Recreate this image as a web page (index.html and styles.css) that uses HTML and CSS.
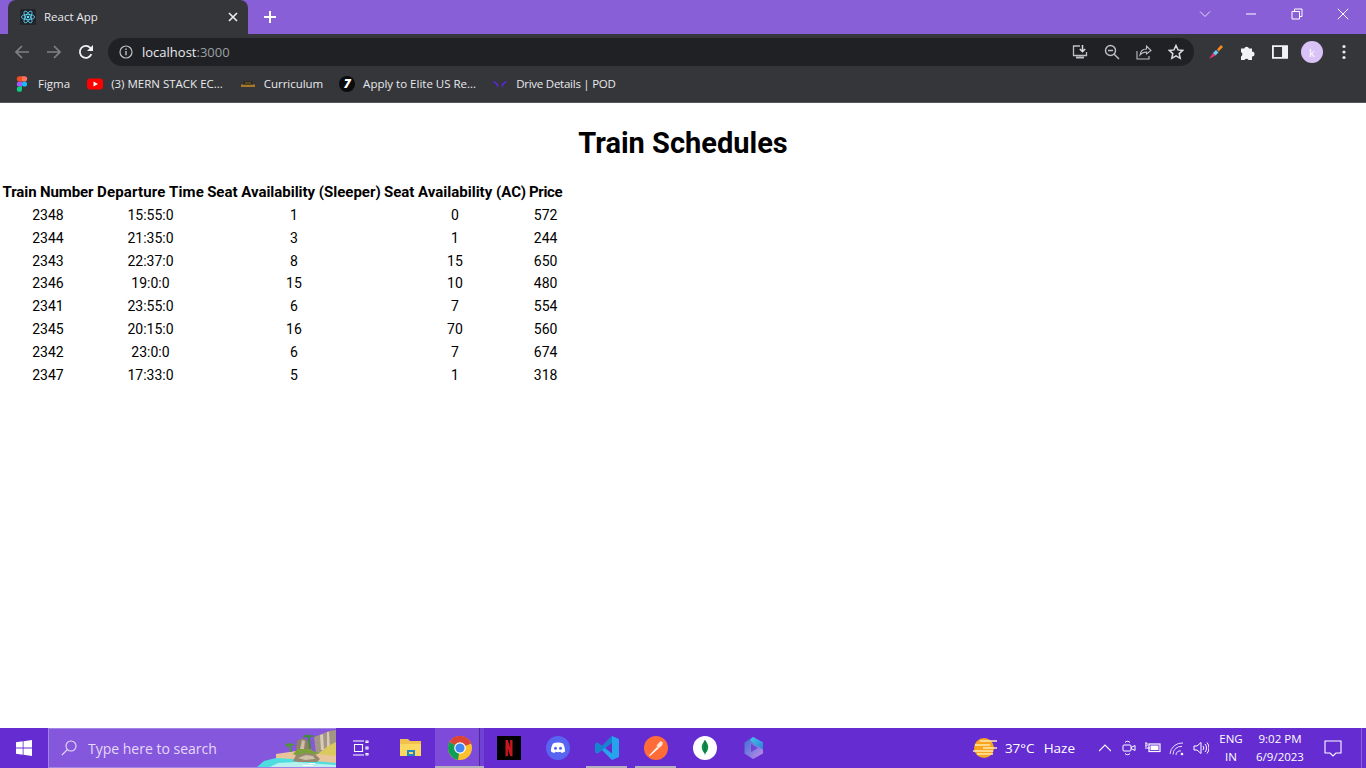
FILE: index.html
```html
<!DOCTYPE html>
<html lang="en">
<head>
<meta charset="utf-8">
<title>React App</title>
<link rel="stylesheet" href="styles.css">
</head>
<body>
<div class="screen">
  <header class="tabstrip">
    <div class="tab">
      <svg class="favicon" viewBox="0 0 16 16"><rect width="16" height="16" rx="2" fill="#20232a"/><g fill="none" stroke="#61dafb" stroke-width=".8"><ellipse cx="8" cy="8" rx="6.6" ry="2.6"/><ellipse cx="8" cy="8" rx="6.6" ry="2.6" transform="rotate(60 8 8)"/><ellipse cx="8" cy="8" rx="6.6" ry="2.6" transform="rotate(120 8 8)"/></g><circle cx="8" cy="8" r="1.3" fill="#61dafb"/></svg>
      <span class="tab-title">React App</span>
      <svg class="tab-close" viewBox="0 0 10 10"><path d="M1 1l8 8M9 1L1 9" stroke="#e8eaed" stroke-width="1.7"/></svg>
    </div>
    <svg class="new-tab" viewBox="0 0 12 12"><path d="M6 0v12M0 6h12" stroke="#fff" stroke-width="2"/></svg>
    <div class="win-controls">
      <span class="win-btn"><svg class="i12" viewBox="0 0 12 12"><path d="M1 3.5l5 5 5-5" fill="none" stroke="#e6dcf7" stroke-width="1"/></svg></span>
      <span class="win-btn"><svg class="i12" viewBox="0 0 12 12"><path d="M1 6h10" stroke="#fff" stroke-width="1"/></svg></span>
      <span class="win-btn"><svg class="i12" viewBox="0 0 12 12"><path d="M1 3.5h7.5V11H1zM3.5 3.5V1H11v7.5H8.5" fill="none" stroke="#fff" stroke-width="1"/></svg></span>
      <span class="win-btn"><svg class="i12" viewBox="0 0 12 12"><path d="M.8.8l10.4 10.4M11.2.8L.8 11.2" stroke="#fff" stroke-width="1"/></svg></span>
    </div>
  </header>

  <nav class="toolbar">
    <span class="tool"><svg class="i16" viewBox="0 0 16 16"><path d="M15 8H2M8 2L2 8l6 6" fill="none" stroke="#7f8184" stroke-width="1.7"/></svg></span>
    <span class="tool"><svg class="i16" viewBox="0 0 16 16"><path d="M1 8h13M8 2l6 6-6 6" fill="none" stroke="#7f8184" stroke-width="1.7"/></svg></span>
    <span class="tool"><svg class="i16" viewBox="0 0 16 16"><path d="M13.4 10.2A6 6 0 1 1 12.3 3.8L14 5.5" fill="none" stroke="#f1f3f4" stroke-width="1.8"/><path d="M15 1v6H9z" fill="#f1f3f4"/></svg></span>
    <div class="omnibox">
      <svg class="info" viewBox="0 0 14 14"><circle cx="7" cy="7" r="6" fill="none" stroke="#bdc1c6" stroke-width="1.2"/><path d="M7 6v4.2M7 3.6v1.3" stroke="#bdc1c6" stroke-width="1.4"/></svg>
      <span class="url">localhost<span class="url-port">:3000</span></span>
      <span class="omni-actions">
        <span class="tool"><svg class="i16" viewBox="0 0 16 16"><path d="M8 2H1.500v9.500h13V8" fill="none" stroke="#bdc1c6" stroke-width="1.300"/><path d="M4 12.500h8v2H4z" fill="#bdc1c6"/><path d="M10.500 1v6.500M7.800 5l2.700 2.700L13.200 5" fill="none" stroke="#dadce0" stroke-width="1.500"/></svg></span>
        <span class="tool"><svg class="i16" viewBox="0 0 16 16"><circle cx="6.500" cy="6.500" r="5" fill="none" stroke="#bdc1c6" stroke-width="1.400"/><path d="M10.200 10.200L15 15M4 6.500h5" stroke="#bdc1c6" stroke-width="1.400"/></svg></span>
        <span class="tool"><svg class="i16" viewBox="0 0 16 16"><path d="M1 7v8h12v-3" fill="none" stroke="#bdc1c6" stroke-width="1.100"/><path d="M4 11c.5-4 3.500-6 6.500-6V2L15 6.500 10.500 10V8C8 8 5.500 9 4 11z" fill="none" stroke="#bdc1c6" stroke-width="1.100"/></svg></span>
        <span class="tool"><svg class="i16" viewBox="0 0 16 16"><path d="M8 1.500l2 4.400 4.800.5-3.600 3.200 1 4.700L8 11.900l-4.200 2.400 1-4.700L1.200 6.400 6 5.900z" fill="none" stroke="#dadce0" stroke-width="1.500"/></svg></span>
      </span>
    </div>
    <div class="extensions">
      <span class="tool"><svg class="i16" viewBox="0 0 16 16"><path d="M1 15l4-6 2.500 2.500z" fill="#e8356d"/><path d="M5 9l3-3 2.500 2.500-3 3z" fill="#6ecbf5"/><path d="M9 5.500L13 1l2 2-4.500 4.500z" fill="#f98b1d"/></svg></span>
      <span class="tool"><svg class="i16" viewBox="0 0 16 16"><path d="M1 4.500h3.200a2.500 2.500 0 0 1 4.800 0H12v3a2.500 2.500 0 0 1 0 5V16H8.500a2.300 2.300 0 0 0-4 0H1v-3.500a2.500 2.500 0 0 0 0-4.500z" fill="#f1f3f4"/></svg></span>
      <span class="tool"><svg class="i16" viewBox="0 0 14 12"><path d="M0 0h14v12H0zM1.600 1.600v8.800H8.800V1.600z" fill="#f1f3f4" fill-rule="evenodd"/></svg></span>
      <span class="tool"><span class="avatar">k</span></span>
      <span class="tool"><svg class="i16" viewBox="0 0 16 16"><circle cx="8" cy="2.500" r="1.600" fill="#e8eaed"/><circle cx="8" cy="8" r="1.600" fill="#e8eaed"/><circle cx="8" cy="13.500" r="1.600" fill="#e8eaed"/></svg></span>
    </div>
  </nav>

  <nav class="bookmarks">
    <a class="bm bm-figma"><svg class="i16" viewBox="0 0 16 16"><circle cx="10.500" cy="8" r="2.600" fill="#1abcfe"/><path d="M8 5.400H5.400a2.600 2.600 0 0 0 0 5.200H8z" fill="#a259ff"/><path d="M8 .2H5.400a2.600 2.600 0 0 0 0 5.200H8z" fill="#f24e1e"/><path d="M8 .2h2.600a2.600 2.600 0 0 1 0 5.200H8z" fill="#ff7262"/><path d="M8 10.600H5.400A2.600 2.600 0 1 0 8 13.200z" fill="#0acf83"/></svg>Figma</a>
    <a class="bm bm-yt"><svg class="i16" viewBox="0 0 16 16"><rect y="2.500" width="16" height="11" rx="3" fill="#f00"/><path d="M6.500 5.500L11 8l-4.500 2.500z" fill="#fff"/></svg>(3) MERN STACK EC...</a>
    <a class="bm bm-cur"><svg class="i16" viewBox="0 0 16 16"><path d="M1 8.500h14v2.500H1z" fill="#a8772a"/><path d="M3.500 5.500h9v3h-9z" fill="#2f2412"/><path d="M5 6.500h6v1H5z" fill="#7d6a3d"/></svg>Curriculum</a>
    <a class="bm bm-elite"><span class="seven">7</span>Apply to Elite US Re...</a>
    <a class="bm bm-pod"><svg class="i16" viewBox="0 0 16 16"><path d="M0 5c3 0 5 1.500 6.500 4l-.5 3C5 9 3 7 0 5zM16 5c-3 0-5 1.500-6.500 4l.5 3c1-3 3-5 6-7z" fill="#5a27d8"/></svg>Drive Details | POD</a>
  </nav>

  <main class="page">
    <h1 class="title">Train Schedules</h1>
    <table class="schedule">
      <thead>
        <tr><th class="c1">Train Number</th><th class="c2">Departure Time</th><th class="c3">Seat Availability (Sleeper)</th><th class="c4">Seat Availability (AC)</th><th class="c5">Price</th></tr>
      </thead>
      <tbody>
        <tr><td>2348</td><td>15:55:0</td><td>1</td><td>0</td><td>572</td></tr>
        <tr><td>2344</td><td>21:35:0</td><td>3</td><td>1</td><td>244</td></tr>
        <tr><td>2343</td><td>22:37:0</td><td>8</td><td>15</td><td>650</td></tr>
        <tr><td>2346</td><td>19:0:0</td><td>15</td><td>10</td><td>480</td></tr>
        <tr><td>2341</td><td>23:55:0</td><td>6</td><td>7</td><td>554</td></tr>
        <tr><td>2345</td><td>20:15:0</td><td>16</td><td>70</td><td>560</td></tr>
        <tr><td>2342</td><td>23:0:0</td><td>6</td><td>7</td><td>674</td></tr>
        <tr><td>2347</td><td>17:33:0</td><td>5</td><td>1</td><td>318</td></tr>
      </tbody>
    </table>
  </main>

  <footer class="taskbar">
    <span class="start"><svg class="i16" viewBox="0 0 16 16"><path d="M0 2.300l6.700-1v6.300H0zM7.500 1.200L16 0v7.600H7.500zM0 8.400h6.700v6.300l-6.700-1zM7.500 8.400H16V16l-8.500-1.200z" fill="#fff"/></svg></span>
    <div class="search">
      <svg class="search-icon" viewBox="0 0 16 16"><circle cx="10" cy="6" r="5" fill="none" stroke="#eadffa" stroke-width="1.100"/><path d="M6.300 9.700L.8 15.200" stroke="#eadffa" stroke-width="1.200"/></svg>
      <span class="search-text">Type here to search</span>
      <svg class="island" viewBox="0 0 80 40">
        <path d="M20 26l20-3 40 4v8H20z" fill="#e9c39a"/>
        <path d="M0 40l8-7 12-3 17 1 43 4v5z" fill="#4fdde0"/>
        <path d="M12 40l10-5 18-1 40 3v3z" fill="#b9f1ee"/>
        <path d="M58 9l8-3 7-3 7-1v24H60z" fill="#a39684"/>
        <path d="M64 7l3-1 1 16h-3zM71 4l2 0 1 16h-3z" fill="#d8ccb6"/>
        <path d="M62 26l10-8 8-4v14z" fill="#d9c95f"/>
        <path d="M40 22l1-9 5-3 5 2 3 6 3 6z" fill="#8f7f69"/>
        <path d="M44 21l2-9 3 1-1 8z" fill="#cbbda6"/>
        <path d="M37 26l5-5 10 0 11 4-6 3H42z" fill="#79a23a"/>
        <path d="M37 33l3-6 9-2 10 1 5 5-3 3H42z" fill="#98866f"/>
        <path d="M42 30l8-3 7 1 2 3-10 1z" fill="#cfc0a8"/>
        <path d="M47 9c2-3 5-3 6-1 2-2 5-1 6 1-2-1-3 0-5 0l1 12h-2l-1-12c-2 0-3 0-5 1z" fill="#3f8f2f"/>
        <path d="M29 18c1-3 4-4 5-2 2-1 4 0 5 2-2-1-3-1-4 0l1 6h-2l-1-6c-1 0-3 1-4 0z" fill="#4d9a2d"/>
        <path d="M47 37h10v1H47zM53 35h6v1h-6z" fill="#fff"/>
      </svg>
    </div>
    <span class="task"><svg class="i16" viewBox="0 0 16 16"><path d="M0 1h11M0 15h11M1.500 4.500h8v7h-8zM13 1h2v1.500h-2zM13 7h2v2h-2zM13 13.500h2V15h-2z" fill="none" stroke="#fff" stroke-width="1.100"/></svg></span>
    <span class="task task-first"><svg class="i22" viewBox="0 0 22 22"><path d="M0 2h8l2 2h11v15H0z" fill="#f0c24d"/><path d="M0 7h21v12H0z" fill="#fbd85f"/><path d="M7 13h8v6H7z" fill="#1e88c9"/><path d="M9 15h4v2H9z" fill="#fbd85f"/></svg></span>
    <span class="task task-on"><svg class="i24" viewBox="0 0 24 24"><circle cx="12" cy="12" r="12" fill="#fbc02d"/><path d="M12 12L1.600 6A12 12 0 0 1 23.200 7.500z" fill="#db4437"/><path d="M12 12L1.600 6A12 12 0 0 0 10 23.800z" fill="#0f9d58"/><circle cx="12" cy="12" r="5.800" fill="#fff"/><circle cx="12" cy="12" r="4.600" fill="#4285f4"/></svg></span>
    <span class="task"><svg class="i24" viewBox="0 0 24 24"><rect width="24" height="24" fill="#000"/><path d="M8.500 4h2.400l2.200 7.500V4h2.400v16.500l-2.400-.4-2.200-7.600v7.600l-2.400.4z" fill="#c9151e"/></svg></span>
    <span class="task"><svg class="i24" viewBox="0 0 24 24"><circle cx="12" cy="12" r="12" fill="#5865f2"/><path d="M7 7.500c3-1.300 7-1.300 10 0 1.500 2.500 2.200 5.200 2 8-1.200.9-2.400 1.400-3.500 1.600l-.9-1.400c-2 .6-3.200.6-5.200 0l-.9 1.400C7.400 16.900 6.200 16.400 5 15.500c-.2-2.800.5-5.500 2-8z" fill="#fff"/><circle cx="9.500" cy="12.300" r="1.500" fill="#5865f2"/><circle cx="14.500" cy="12.300" r="1.500" fill="#5865f2"/></svg></span>
    <span class="task task-run"><svg class="i24" viewBox="0 0 24 24"><path d="M17 0l7 3v18l-7 3-10-10-4.500 3.500L0 16V8l2.500-1.500L7 10z" fill="#27a3ee"/><path d="M17 6.500L10 12l7 5.500z" fill="#652cd2"/><path d="M0 8l2.500-1.500L7 10l10-10v6.500L3 17l-3-1z" fill="#0f7cc4" opacity=".8"/></svg></span>
    <span class="task task-run"><svg class="i24" viewBox="0 0 24 24"><circle cx="12" cy="12" r="12" fill="#ff6c37"/><path d="M5 19.500l8-8.500 1.500 1.500-8.500 7.500z" fill="#fff"/><path d="M12.500 9.500l4-4.500 2.500 1.500-1 3-3.500 3z" fill="#ffe2d6"/></svg></span>
    <span class="task"><svg class="i24" viewBox="0 0 24 24"><circle cx="12" cy="12" r="12" fill="#fff"/><path d="M12 4c2.500 3 3.500 5.500 3.200 8-.3 2.600-1.800 4.400-2.900 5.300L12 20l-.3-2.700c-1.100-.9-2.600-2.700-2.900-5.300C8.500 9.500 9.500 7 12 4z" fill="#0f8f4c"/><path d="M12 4v14" stroke="#0a5c30" stroke-width=".6"/></svg></span>
    <span class="task"><svg class="i24" viewBox="0 0 24 24"><defs><linearGradient id="bingg" x1="0" y1="0" x2="1" y2="1"><stop offset="0" stop-color="#42c8e8"/><stop offset="1" stop-color="#2f7fd6"/></linearGradient><linearGradient id="bingp" x1="0" y1="0" x2="1" y2="1"><stop offset="0" stop-color="#3a6fd8"/><stop offset="1" stop-color="#c58be6"/></linearGradient></defs><path d="M11 1l10 5.500v11L11 23 2.500 17.500v-11z" fill="url(#bingp)"/><path d="M11 1l10 5.500v7L14 9.500 8 4z" fill="url(#bingg)"/><path d="M9 8l7 4-7 4z" fill="#652cd2" opacity=".7"/></svg></span>
    <div class="tray">
      <svg class="weather" viewBox="0 0 24 20"><circle cx="11" cy="10" r="10" fill="#f8a51d"/><path d="M7 3h17M2 7h15M10 10h14M0 13h20M4 16h16" stroke="#ffe9b0" stroke-width="1.300"/></svg>
      <span class="temp">37°C</span>
      <span class="haze">Haze</span>
      <span class="tray-ico tray-chev"><svg class="i12" viewBox="0 0 12 12"><path d="M0 9l6-6 6 6" fill="none" stroke="#fff" stroke-width="1.100"/></svg></span>
      <span class="tray-ico"><svg class="i16" viewBox="0 0 16 16"><path d="M4 2.500c1-1.600 4-1.600 5 0M4 13.500c1 1.600 4 1.600 5 0" fill="none" stroke="#fff"/><rect x="2" y="5" width="8" height="6" rx="1" fill="none" stroke="#fff"/><path d="M10 7.500l4-2v5l-4-2" fill="none" stroke="#fff"/></svg></span>
      <span class="tray-ico"><svg class="i16" viewBox="0 0 16 16"><path d="M0 3h2v3H0zM0 8h5" stroke="#fff" fill="none"/><rect x="4" y="4" width="11" height="7.500" fill="none" stroke="#fff" stroke-width="1.200"/><rect x="5.500" y="5.500" width="8" height="4.500" fill="#fff"/></svg></span>
      <span class="tray-ico"><svg class="i16" viewBox="0 0 16 16"><g fill="none" stroke="#fff" stroke-width="1" opacity=".85"><path d="M1 14a12 12 0 0 1 13-11"/><path d="M4 14.500a8 8 0 0 1 9-8"/><path d="M7 15a4 4 0 0 1 5-4"/></g><circle cx="13" cy="14" r="1.300" fill="#fff"/></svg></span>
      <span class="tray-ico"><svg class="i16" viewBox="0 0 16 16"><path d="M1 6h3l4-3.500v11L4 10H1z" fill="none" stroke="#fff"/><path d="M10 6a3 3 0 0 1 0 4M12 4a6 6 0 0 1 0 8M14 2.500a8.500 8.500 0 0 1 0 11" fill="none" stroke="#fff"/></svg></span>
      <span class="lang">ENG<br>IN</span>
      <span class="clock">9:02 PM<br>6/9/2023</span>
      <span class="notify"><svg class="i18" viewBox="0 0 18 18"><path d="M1 2h16v12h-5l-3 3-3-3H1z" fill="none" stroke="#fff" stroke-width="1.100"/></svg></span>
      <span class="show-desktop"></span>
    </div>
  </footer>
</div>
</body>
</html>
```
FILE: styles.css
```css
* { box-sizing: border-box; }
html, body { margin: 0; height: 100%; overflow: hidden; }
body { font-family: "Open Sans", "Noto Sans", sans-serif; color: #000; background: #fff; }
svg { display: block; flex: none; }
.i12 { width: 12px; height: 12px; }
.i16 { width: 16px; height: 16px; }
.i18 { width: 18px; height: 18px; }
.i22 { width: 22px; height: 22px; }
.i24 { width: 24px; height: 24px; }

.screen { display: flex; flex-direction: column; height: 768px; }

/* tab strip */
.tabstrip { height: 34px; background: #895fd7; display: flex; align-items: flex-end; padding-left: 8px; }
.tab { width: 240px; height: 34px; background: #35363a; border-radius: 8px 8px 0 0; display: flex; align-items: center; padding: 0 10px 0 12px; color: #e8eaed; font-size: 11.5px; }
.favicon { width: 16px; height: 16px; }
.tab-title { margin: 0 0 2px 8px; flex: 1; }
.tab-close { width: 10px; height: 10px; }
.new-tab { width: 12px; height: 12px; margin: 0 0 11px 16px; }
.win-controls { display: flex; margin-left: auto; align-self: flex-start; }
.win-btn { width: 46px; height: 28px; display: flex; align-items: center; justify-content: center; }

/* toolbar */
.toolbar { height: 32px; background: #35363a; display: flex; align-items: flex-start; padding: 4px 6px 0; }
.tool { width: 32px; height: 28px; display: flex; align-items: center; justify-content: center; }
.omnibox { flex: 1; height: 28px; margin-left: 6px; background: #202124; border-radius: 14px; display: flex; align-items: center; padding-left: 11px; }
.info { width: 14px; height: 14px; }
.url { margin-left: 9px; color: #e8eaed; font-size: 13px; }
.url-port { color: #9aa0a6; }
.omni-actions { margin-left: auto; display: flex; padding-right: 2px; }
.extensions { display: flex; margin-left: 6px; }
.avatar { width: 22px; height: 22px; border-radius: 50%; background: #d9c2f5; color: #fff; font-size: 11px; display: flex; align-items: center; justify-content: center; }

/* bookmarks */
.bookmarks { height: 37px; background: #35363a; border-bottom: 1px solid #55565a; display: flex; align-items: center; padding: 0 0 1px 14px; color: #e8eaed; font-size: 11.5px; }
.bm { display: flex; align-items: center; gap: 8px; white-space: nowrap; }
.bm-yt { margin-left: 17px; }
.bm-cur { margin-left: 17px; letter-spacing: -.05px; }
.bm-elite { margin-left: 16px; }
.bm-pod { margin-left: 16px; letter-spacing: -.25px; }
.seven { width: 16px; height: 16px; border-radius: 50%; background: #0b0b0b; color: #fff; font-size: 12px; font-weight: 800; font-style: italic; display: flex; align-items: center; justify-content: center; }

/* page */
.page { flex: 1; background: #fff; min-height: 0; font-family: Roboto, "Open Sans", sans-serif; }
.title { margin: 21px 0 0; font-size: 29px; line-height: 38px; font-weight: 700; text-align: center; }
.schedule { margin: 18px 0 0 -1px; border-collapse: separate; border-spacing: 3px 2px; font-size: 14px; }
.schedule th, .schedule td { padding: 1px 0; line-height: 18.86px; text-align: center; white-space: nowrap; }
.schedule th { font-size: 15px; font-weight: 700; }
.schedule .c1 { width: 92px; letter-spacing: -.1px; }
.schedule .c2 { width: 106px; letter-spacing: .15px; }
.schedule .c3 { width: 174px; letter-spacing: -.02px; }
.schedule .c4 { width: 142px; }
.schedule .c5 { width: 33px; letter-spacing: -.4px; }

/* taskbar */
.taskbar { height: 40px; background: #652cd2; display: flex; align-items: stretch; color: #fff; }
.start { width: 48px; display: flex; align-items: center; justify-content: center; }
.search { width: 288px; background: #8557dc; border: 1px solid #a283e6; border-width: 1px 0 1px 1px; display: flex; align-items: center; padding-left: 12px; overflow: hidden; }
.search-icon { width: 16px; height: 16px; }
.search-text { margin-left: 11px; font-size: 14px; color: #e6d8f8; }
.island { width: 80px; height: 40px; margin-left: auto; }
.task { width: 49px; display: flex; align-items: center; justify-content: center; position: relative; }
.task-first { margin-left: 1px; }
.task-on { background: linear-gradient(to right, #7d4ad9 44px, #4c2a96 44px, #4c2a96 45px, #7242d6 45px); }
.task-on::after, .task-run::after { content: ""; position: absolute; bottom: 0; height: 2px; background: #b5b0bd; }
.task-on::after { left: 0; right: 0; }
.task-run::after { left: 4px; right: 4px; }
.tray { margin-left: auto; display: flex; align-items: center; font-size: 13px; }
.weather { width: 24px; height: 20px; }
.temp { margin-left: 8px; font-size: 13.5px; }
.haze { margin-left: 9px; font-size: 13.5px; }
.tray-ico { width: 24px; display: flex; align-items: center; justify-content: center; }
.tray-chev { margin-left: 18px; }
.lang, .clock { text-align: center; font-size: 11.5px; line-height: 18px; }
.lang { width: 36px; }
.clock { width: 62px; }
.notify { width: 30px; margin-left: 7px; display: flex; align-items: center; justify-content: center; }
.show-desktop { width: 5px; height: 40px; margin-left: 13px; border-left: 1px solid #8a63dc; }
```
